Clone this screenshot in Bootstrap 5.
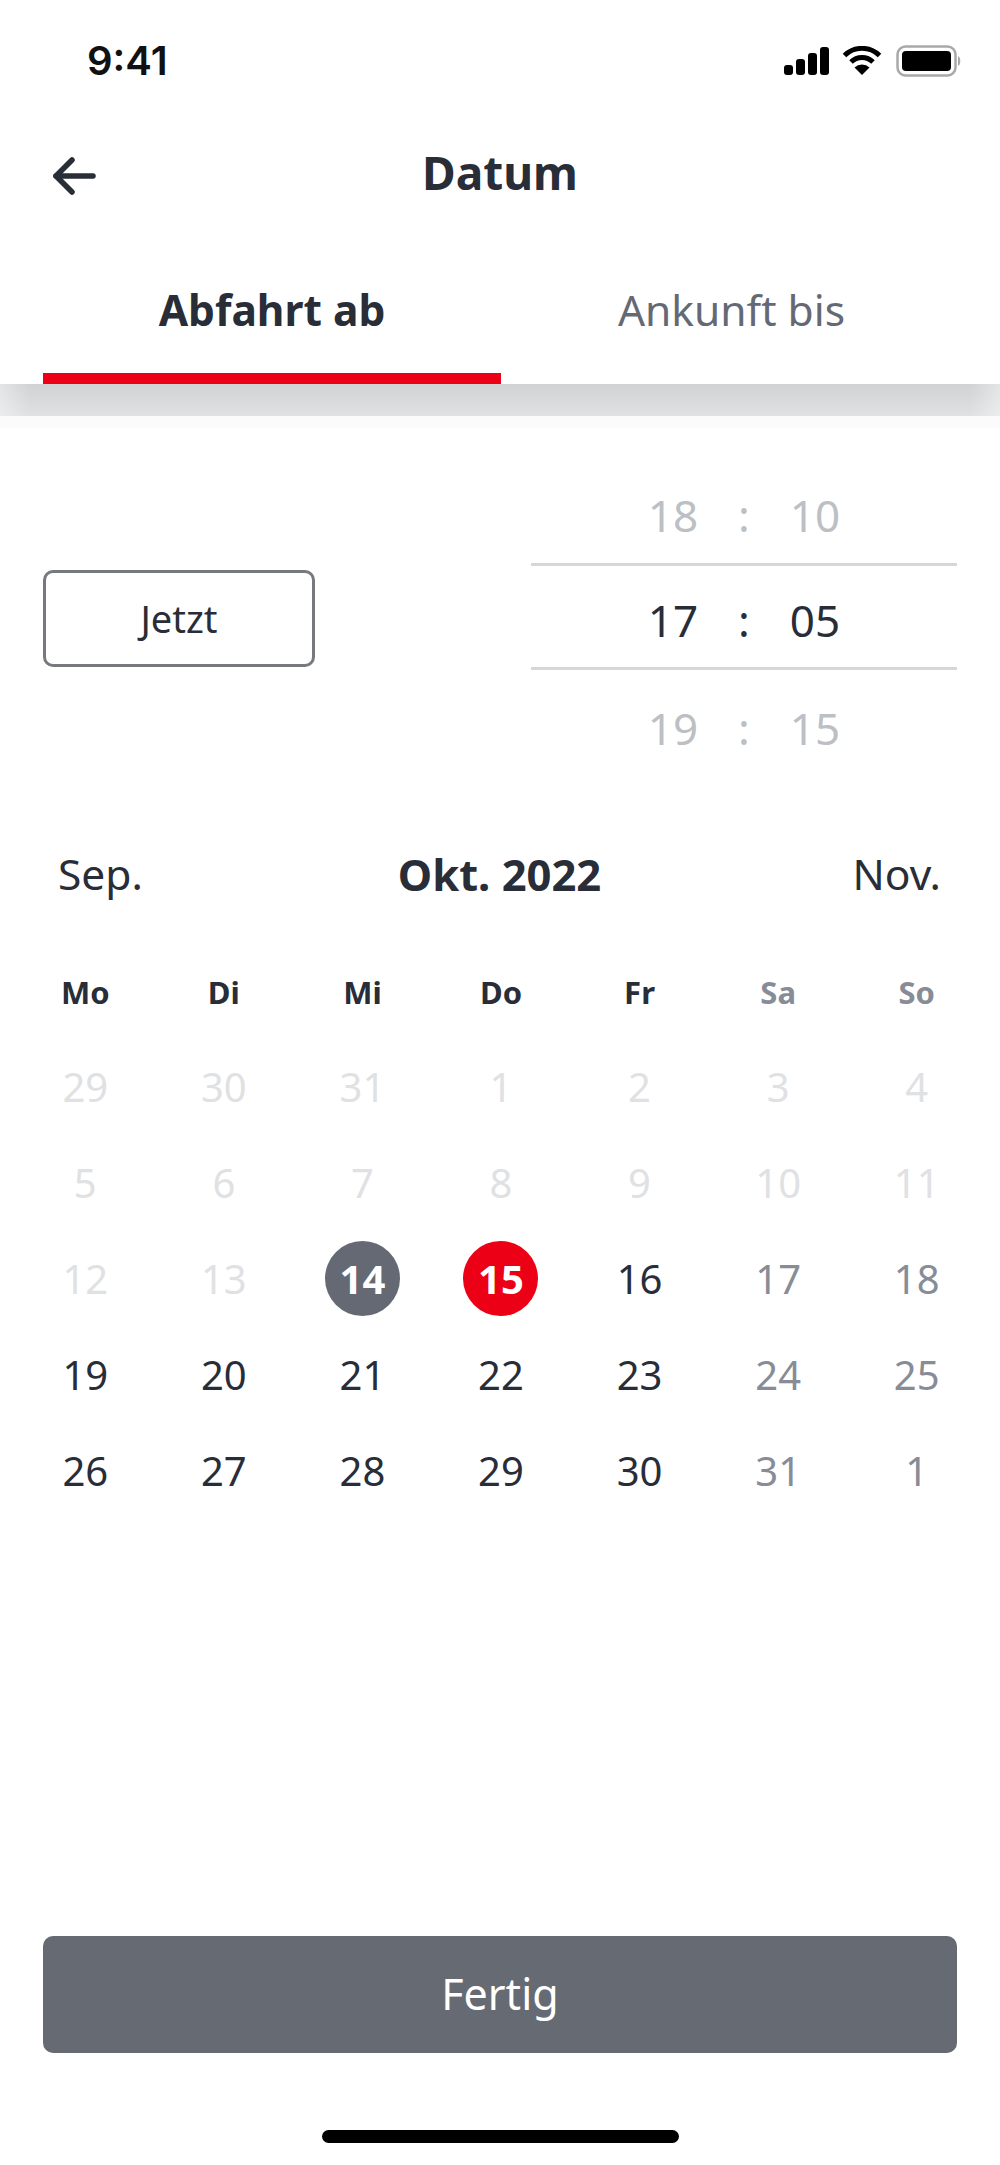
<!DOCTYPE html>
<html lang="de">

<head>
  <meta charset="UTF-8" />
  <meta name="viewport" content="width=device-width, initial-scale=1.0" />
  <title>Datum</title>
  <link href="https://cdn.jsdelivr.net/npm/bootstrap@5.3.3/dist/css/bootstrap.min.css" rel="stylesheet" />
  <style>
    body {
      width: 1000px;
      height: 2165px;
      overflow: hidden;
      background: #fff;
      color: #282d37;
      font-family: "Noto Sans", sans-serif;
    }
    .status-bar { height: 120px; padding: 2px 38px 0 87px; }
    .status-time { font-family: Inter, "Liberation Sans", sans-serif; font-size: 40px; font-weight: 600; color: #111; }
    .signal-icon { margin-right: 12px; }
    .wifi-icon { margin-right: 13px; }
    .head-bar { height: 104px; padding-left: 53px; }
    .head-back { width: 43px; margin-top: 8px; }
    .head-title { font-size: 46px; font-weight: 700; line-height: 1; left: 0; right: 0; }
    .tab-row { padding: 0 41px 0 43px; }
    .tab-item { padding: 36px 0 13px; line-height: 100px; font-size: 42.5px; border-bottom: 11px solid transparent; color: #646973; }
    .tab-item.is-on { font-weight: 700; color: #282d37; border-bottom-color: #ec0016; }
    .tab-item.is-off { padding-left: 3px; }
    .shade-strip { height: 32px; background: linear-gradient(to right, rgba(255, 255, 255, .4), transparent 30px, transparent 970px, rgba(255, 255, 255, .4)), linear-gradient(to bottom, #d0d2d4, #dfe1e2); }
    .shade-after { height: 12px; background: #fbfbfb; }
    .picker-row { padding: 0 43px; margin-top: 29px; }
    .now-btn { width: 272px; height: 97px; margin-top: 3px; padding-top: 6px; font-size: 38px; color: #282d37; border: 3px solid #76797d; border-radius: 10px; background: #fff; }
    .wheel { width: 426px; }
    .wheel-line { height: 107px; padding-top: 10px; font-size: 44px; line-height: 96px; color: #bcbfc4; }
    .wheel-line.is-first { height: 106px; }
    .wheel-line span { width: 71px; text-align: center; }
    .wheel-line.is-on { padding-top: 6px; color: #282d37; border-top: 3px solid #d5d7d9; border-bottom: 3px solid #d5d7d9; }
    .month-row { padding: 0 59px 0 58px; margin-top: 67px; height: 60px; font-size: 42.5px; line-height: 60px; }
    .month-row > div { flex: 1; }
    .month-now { font-size: 43.5px; font-weight: 700; flex: none !important; }
    .cal-grid { display: grid; grid-template-columns: repeat(7, 1fr); grid-auto-rows: 96px; padding: 0 14px 0 16px; margin-top: 38.5px; font-size: 40px; text-align: center; }
    .cal-grid > div { display: flex; align-items: center; justify-content: center; }
    .cal-head { font-size: 31px; font-weight: 700; padding-top: 4px; }
    .cal-off { color: #dfe1e3; }
    .cal-end { color: #878c96; }
    .cal-dot { width: 75px; height: 75px; border-radius: 50%; color: #fff; font-weight: 700; line-height: 75px; }
    .dot-gray { background: #646973; }
    .dot-red { background: #ec0016; }
    .done-wrap { padding: 0 43px; }
    .done-btn { height: 117px; padding-bottom: 6px; font-size: 43px; color: #fff; background: #666a73; border: 0; border-radius: 10px; }
    .home-wrap { height: 112px; padding-top: 77px; }
    .home-bar { width: 357px; height: 13px; border-radius: 7px; background: #000; }
  </style>
</head>

<body class="d-flex flex-column">
  <div class="status-bar d-flex align-items-center justify-content-between">
    <div class="status-time">9:41</div>
    <div class="d-flex align-items-center">
      <svg class="signal-icon" width="45" height="28" viewBox="0 0 45 28">
        <rect x="0" y="18" width="9" height="10" rx="3" />
        <rect x="12" y="12" width="9" height="16" rx="3" />
        <rect x="24" y="6" width="9" height="22" rx="3" />
        <rect x="36" y="0" width="9" height="28" rx="3" />
      </svg>
      <svg class="wifi-icon" width="42" height="30" viewBox="0 0 42 30">
        <path d="M21 29 L13.5 21.5 A11 11 0 0 1 28.5 21.5 Z" />
        <path d="M10 16 A15.5 15.5 0 0 1 32 16" fill="none" stroke="#000" stroke-width="5" />
        <path d="M3.5 9.5 A25 25 0 0 1 38.5 9.5" fill="none" stroke="#000" stroke-width="5" />
      </svg>
      <svg width="66" height="32" viewBox="0 0 66 32">
        <rect x="1.5" y="1.5" width="58" height="29" rx="8" fill="none" stroke="#a9a9a9" stroke-width="2.5" />
        <rect x="6" y="6" width="49" height="20" rx="4" />
        <path d="M62 11 C65 12 65 20 62 21 Z" fill="#a9a9a9" />
      </svg>
    </div>
  </div>

  <div class="head-bar position-relative d-flex align-items-center">
    <svg class="head-back" width="43" height="38" viewBox="0 0 43 38" fill="none" stroke="#282d37" stroke-width="5.5" stroke-linecap="round" stroke-linejoin="round">
      <path d="M19 3 L3 19 L19 35" />
      <path d="M3 19 H40" />
    </svg>
    <div class="head-title position-absolute text-center">Datum</div>
  </div>

  <div class="tab-row row g-0 text-center">
    <div class="tab-item is-on col-6">Abfahrt ab</div>
    <div class="tab-item is-off col-6">Ankunft bis</div>
  </div>
  <div class="shade-strip"></div>
  <div class="shade-after"></div>

  <div class="picker-row d-flex align-items-center justify-content-between">
    <button type="button" class="btn now-btn">Jetzt</button>
    <div class="wheel">
      <div class="wheel-line is-first d-flex justify-content-center"><span>18</span><span>:</span><span>10</span></div>
      <div class="wheel-line is-on d-flex justify-content-center"><span>17</span><span>:</span><span>05</span></div>
      <div class="wheel-line d-flex justify-content-center"><span>19</span><span>:</span><span>15</span></div>
    </div>
  </div>

  <div class="month-row d-flex justify-content-between">
    <div>Sep.</div>
    <div class="month-now">Okt. 2022</div>
    <div class="text-end">Nov.</div>
  </div>

  <div class="cal-grid">
    <div class="cal-head">Mo</div><div class="cal-head">Di</div><div class="cal-head">Mi</div><div class="cal-head">Do</div><div class="cal-head">Fr</div><div class="cal-head cal-end">Sa</div><div class="cal-head cal-end">So</div>
    <div class="cal-off">29</div><div class="cal-off">30</div><div class="cal-off">31</div><div class="cal-off">1</div><div class="cal-off">2</div><div class="cal-off">3</div><div class="cal-off">4</div>
    <div class="cal-off">5</div><div class="cal-off">6</div><div class="cal-off">7</div><div class="cal-off">8</div><div class="cal-off">9</div><div class="cal-off">10</div><div class="cal-off">11</div>
    <div class="cal-off">12</div><div class="cal-off">13</div><div><span class="cal-dot dot-gray">14</span></div><div><span class="cal-dot dot-red">15</span></div><div>16</div><div class="cal-end">17</div><div class="cal-end">18</div>
    <div>19</div><div>20</div><div>21</div><div>22</div><div>23</div><div class="cal-end">24</div><div class="cal-end">25</div>
    <div>26</div><div>27</div><div>28</div><div>29</div><div>30</div><div class="cal-end">31</div><div class="cal-end">1</div>
  </div>

  <div class="done-wrap mt-auto">
    <button type="button" class="btn done-btn w-100">Fertig</button>
  </div>
  <div class="home-wrap d-flex justify-content-center">
    <div class="home-bar"></div>
  </div>

  <script src="https://cdn.jsdelivr.net/npm/bootstrap@5.3.3/dist/js/bootstrap.bundle.min.js"></script>
</body>

</html>
